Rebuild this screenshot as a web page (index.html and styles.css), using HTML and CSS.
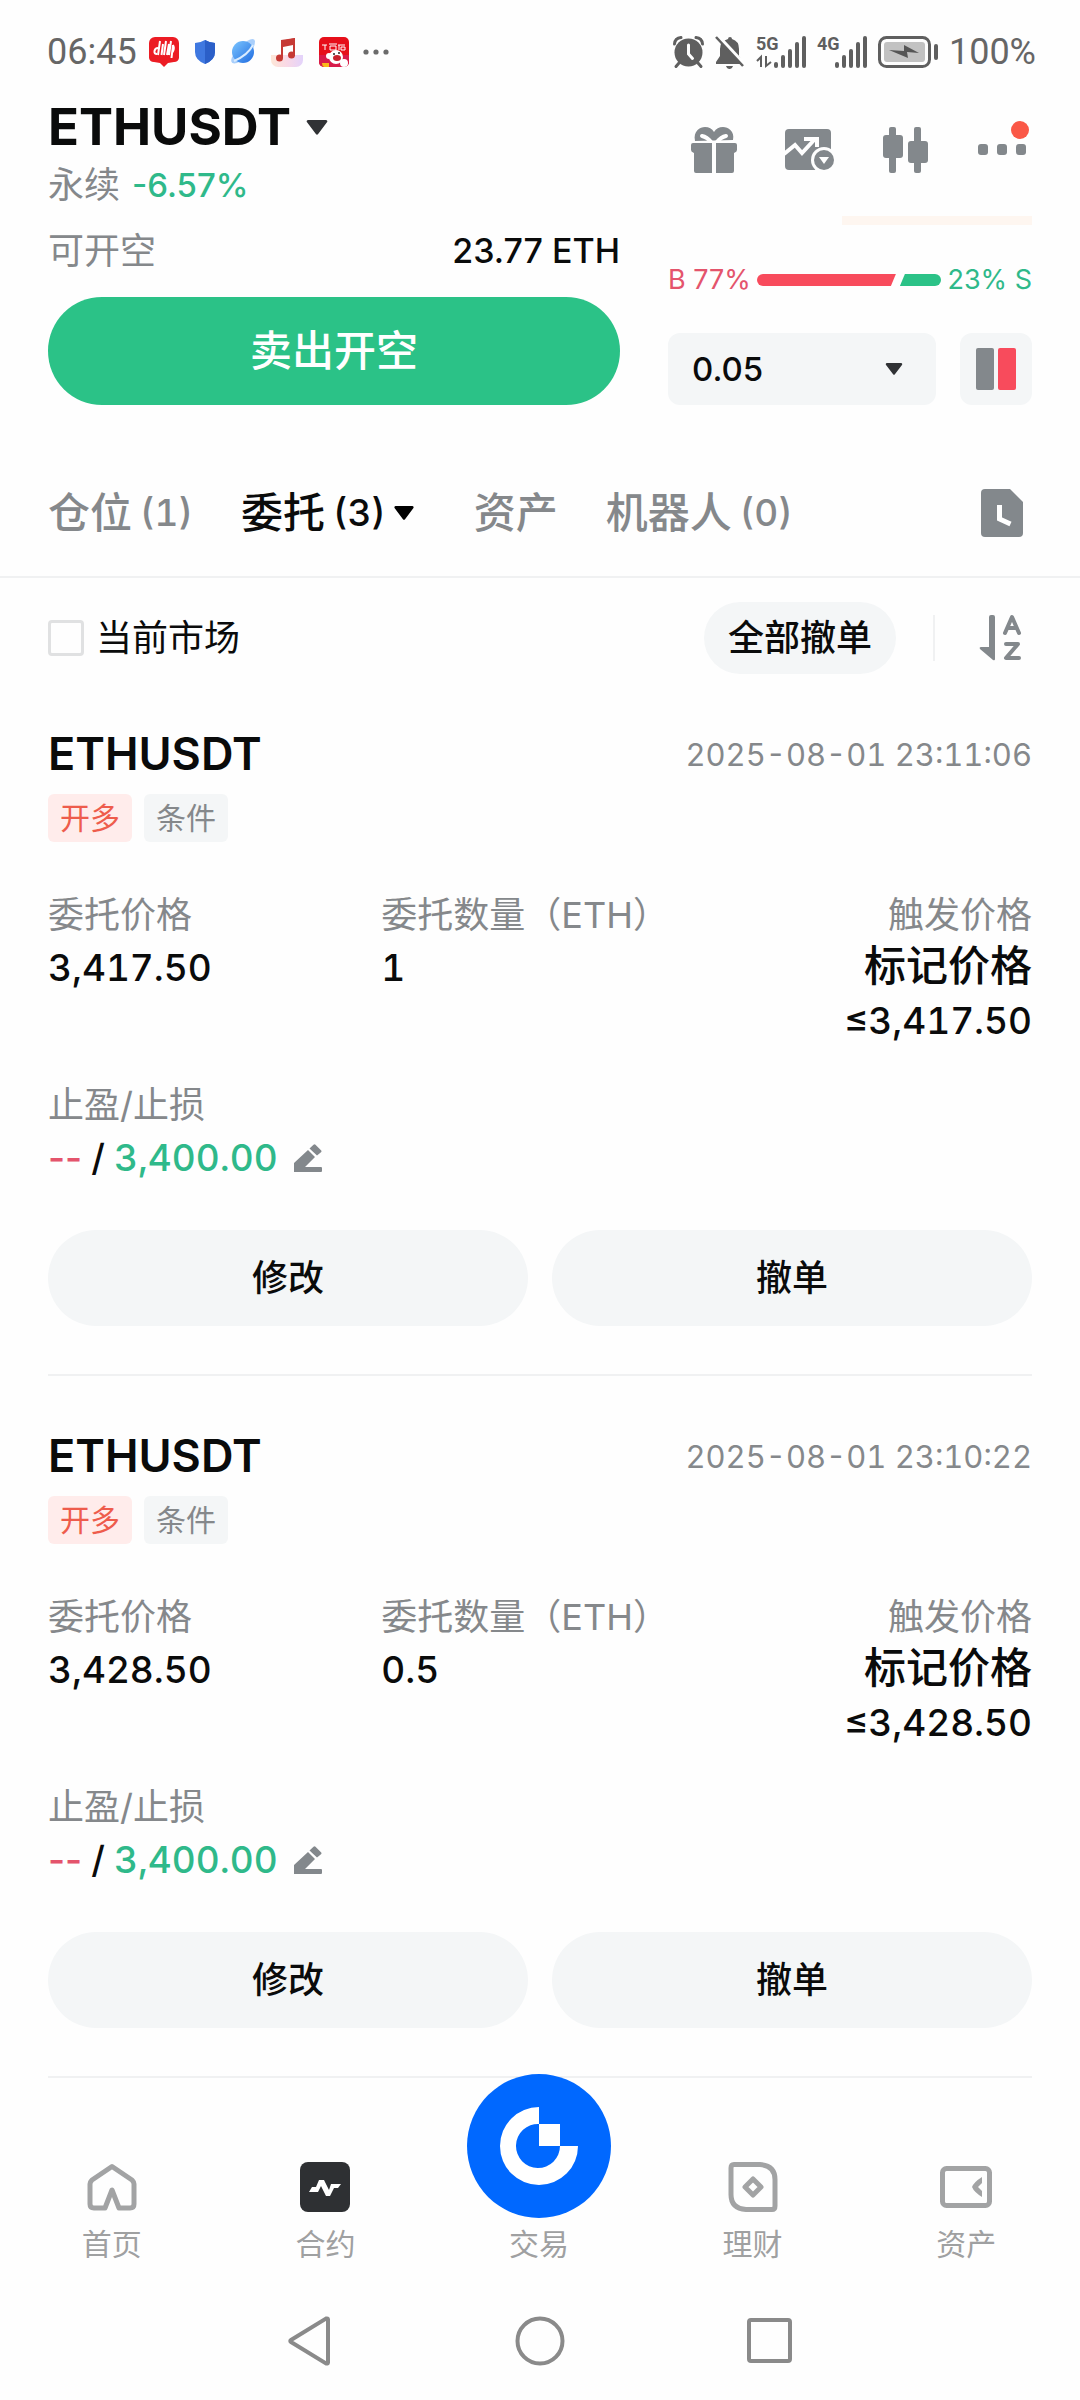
FILE: index.html
```html
<!DOCTYPE html>
<html lang="zh-CN">
<head>
<meta charset="utf-8">
<meta name="viewport" content="width=device-width, initial-scale=1">
<title>ETHUSDT 永续</title>
<link rel="stylesheet" href="styles.css">
</head>
<body>
<svg class="defs" aria-hidden="true">
  <symbol id="caret" viewBox="0 0 22 16"><path d="M1.500 0h19a1.500 1.500 0 0 1 1.100 2.500l-9.400 12.500a1.500 1.500 0 0 1-2.400 0L.4 2.500A1.500 1.500 0 0 1 1.500 0z"/></symbol>
  <symbol id="pencil" viewBox="0 0 28 28"><path d="M0 28V19L14 6l7 7-10 10h16q1 0 1 1v3q0 1-1 1zM15.500 4.500 19.500.7q1-1 2 0l5.500 5.600q1 1 0 2L23 11.500z"/></symbol>
</svg>

<div class="statusbar">
  <span class="clock">06:45</span>
  <div class="notices">
    <svg width="30" height="30" viewBox="0 0 30 30"><path d="M6 0h18a6 6 0 0 1 6 6v15a5 5 0 0 1-5 4l-6 1-4 4-4-4-6-1a5 5 0 0 1-5-4V6a6 6 0 0 1 6-6z" fill="#ec1c24"/><path d="M11 4 9 18M9 11q-3 0-3.500 3T8 17M14 7l-1.500 11M17 4l-2 14M20 7l-2 11M20 18l2-14M24 8q2 4-1 8M24 8l-1.500 13" stroke="#fff" stroke-width="2" fill="none"/></svg>
    <svg width="20" height="24" viewBox="0 0 20 24"><path d="M10 0q5 3 10 3v9q0 8-10 12Q0 20 0 12V3q5 0 10-3z" fill="#3f78e0"/><path d="M10 0q5 3 10 3v9q0 8-10 12z" fill="#2b5fc8"/></svg>
    <svg width="24" height="26" viewBox="0 0 24 26"><defs><linearGradient id="sky" x1="0" y1="0" x2="1" y2="1"><stop offset="0" stop-color="#7cc6ff"/><stop offset="1" stop-color="#1f6be0"/></linearGradient></defs><path d="M1 18q-3 8 5 6Q24 14 24 2q-1-4-8 0" fill="#a9cffb"/><circle cx="12" cy="13" r="11" fill="url(#sky)"/><path d="M3 22Q17 16 22 6" stroke="#d9ecff" stroke-width="2" fill="none"/></svg>
    <svg width="32" height="30" viewBox="0 0 32 30"><defs><linearGradient id="rose"><stop offset="0" stop-color="#fde0cc"/><stop offset=".5" stop-color="#f8cfe0"/><stop offset="1" stop-color="#dcc8fa"/></linearGradient></defs><path d="M0 18h32v5a7 7 0 0 1-7 7H7a7 7 0 0 1-7-7z" fill="url(#rose)" opacity=".8"/><path d="M10 4 24 1v18h-2V8L12 10v11h-2z" fill="#c63a35"/><path d="M10 3 24 1v6l-14 2z" fill="#c63a35"/><circle cx="8.500" cy="21" r="3.500" fill="#c63a35"/><circle cx="20.500" cy="18" r="3.500" fill="#c63a35"/></svg>
    <svg width="30" height="30" viewBox="0 0 30 30"><rect width="30" height="30" rx="5" fill="#e60f1a"/><path d="M3 8h5M6 8v5M10 7h8M11 9h6v4h-6zM19 8h7M20 8v5M22 10h4v3h-4z" stroke="#fff" stroke-width="1" fill="none"/><path d="M0 18h30v7a5 5 0 0 1-5 5H5a5 5 0 0 1-5-5z" fill="#d81b4a"/><circle cx="17" cy="20" r="7" fill="#fff"/><circle cx="25" cy="26" r="4" fill="#fff"/><circle cx="10" cy="19" r="3" fill="#fff"/><ellipse cx="18" cy="21" rx="4" ry="3" fill="#c8202c"/><circle cx="15" cy="17" r="1" fill="#222"/><circle cx="20" cy="16" r="1" fill="#222"/><path d="M3 26h7v4H5q-2-1-2-4z" fill="#f9b91c"/></svg>
    <svg width="26" height="6" viewBox="0 0 26 6" fill="#6b6b6b"><circle cx="1" cy="3" r="2.600"/><circle cx="11" cy="3" r="2.600"/><circle cx="21" cy="3" r="2.600"/></svg>
  </div>
  <div class="system">
    <svg width="31" height="32" viewBox="0 0 31 32"><circle cx="15.500" cy="16.500" r="14" fill="#5f5f5f"/><path d="M1.500 8Q2 2 8 1.500M29.500 8Q29 2 23 1.500M6 27l-3 3.500M25 27l3 3.500" stroke="#5f5f5f" stroke-width="3" fill="none" stroke-linecap="round"/><path d="M15.500 9v9l4 4.500" stroke="#fff" stroke-width="3" fill="none" stroke-linecap="round"/></svg>
    <svg width="30" height="33" viewBox="0 0 30 33"><path d="M13 3q0-2 2-2t2 2q7 2 7 10v7l4 6v2H1v-2l4-6v-7Q5 5 13 3zM11 30h7q-1 3-3.500 3T11 30z" fill="#5f5f5f"/><path d="M3 0 30 29" stroke="#fff" stroke-width="4"/><path d="M1 1 28 30" stroke="#5f5f5f" stroke-width="2.500"/></svg>
    <svg class="signal" width="52" height="32" viewBox="0 0 52 32" fill="#5f5f5f"><text x="0" y="14" class="net">5G</text><path d="M1 25 5 21v10M10 20v10l5-4" stroke="#5f5f5f" stroke-width="2" fill="none"/><rect x="18" y="26" width="4" height="6" rx="2"/><rect x="25" y="19" width="4" height="13" rx="2"/><rect x="32" y="13" width="4" height="19" rx="2"/><rect x="39" y="6" width="4" height="26" rx="2"/><rect x="46" y="0" width="4" height="32" rx="2"/></svg>
    <svg class="signal" width="52" height="32" viewBox="0 0 52 32" fill="#5f5f5f"><text x="0" y="14" class="net">4G</text><rect x="18" y="26" width="4" height="6" rx="2"/><rect x="25" y="19" width="4" height="13" rx="2"/><rect x="32" y="13" width="4" height="19" rx="2"/><rect x="39" y="6" width="4" height="26" rx="2"/><rect x="46" y="0" width="4" height="32" rx="2"/></svg>
    <svg width="60" height="32" viewBox="0 0 60 32"><rect x="1.500" y="1.500" width="50" height="29" rx="7" fill="none" stroke="#5f5f5f" stroke-width="3"/><rect x="6" y="6" width="41" height="20" rx="3" fill="#c2c2c2"/><rect x="56" y="8" width="4" height="16" rx="2" fill="#5f5f5f"/><path d="M11 14l15 1V9l15 8-12-1 1 6z" fill="#555"/></svg>
    <span class="charge">100%</span>
  </div>
</div>

<header class="topbar">
  <div class="pair">
    <button class="pair-name" type="button">ETHUSDT <svg width="22" height="15" fill="#303235"><use href="#caret"/></svg></button>
    <p class="pair-info"><span>永续</span> <b class="up">-6.57%</b></p>
  </div>
  <div class="tools">
    <button type="button" aria-label="礼物"><svg width="48" height="48" viewBox="0 0 48 48" fill="#83888c"><path d="M5 16C3 6 10 2 15 2q6 0 9 5 3-5 9-5c5 0 12 4 10 13z"/><path d="M12 11q5 1 9 6M36 11q-5 1-9 6" stroke="#fff" stroke-width="4" stroke-linecap="round" fill="none"/><path d="M3 18h19v30H6q-2 0-2-2V28q-3-1-3-3v-5q0-2 2-2zM26 18h19q2 0 2 2v5q0 2-3 3v18q0 2-2 2H26z"/></svg></button>
    <button type="button" aria-label="行情图"><svg width="48" height="48" viewBox="0 0 48 48"><rect x="-1" y="4" width="46" height="41" rx="4" fill="#83888c"/><path d="M-2 29 9 20l7 8L29 14M18 14h13v8" stroke="#fff" stroke-width="4" fill="none"/><circle cx="38" cy="35" r="13" fill="#fefefe"/><circle cx="38" cy="35" r="10" fill="#83888c"/><path d="M33 32h10l-5 7z" fill="#fff"/></svg></button>
    <button type="button" aria-label="K线"><svg width="48" height="48" viewBox="0 0 48 48" fill="#83888c"><rect x="7" y="2" width="7" height="46" rx="2"/><rect x="1" y="10" width="20" height="23" rx="3"/><rect x="32" y="2" width="7" height="46" rx="2"/><rect x="26" y="16" width="20" height="22" rx="3"/></svg></button>
    <button type="button" aria-label="更多"><svg width="48" height="48" viewBox="0 0 48 48" fill="#83888c"><rect x="0" y="19" width="10" height="11" rx="3"/><rect x="19" y="19" width="10" height="11" rx="3"/><rect x="38" y="19" width="10" height="11" rx="3"/><circle cx="42" cy="5" r="9" fill="#fa5847"/></svg></button>
  </div>
</header>

<section class="trade">
  <div class="order-side">
    <p class="available"><span>可开空</span><b>23.77 ETH</b></p>
    <button class="sell" type="button">卖出开空</button>
  </div>
  <div class="book-side">
    <div class="depth"></div>
    <div class="ratio">
      <span class="down">B 77%</span>
      <div class="ratio-bar"><i class="buy" style="flex-grow: 77"></i><i class="ask" style="flex-grow: 23"></i></div>
      <span class="up">23% S</span>
    </div>
    <div class="book-tools">
      <div class="step">
        <select aria-label="深度精度"><option>0.05</option></select>
        <svg width="18" height="12" fill="#303235"><use href="#caret"/></svg>
      </div>
      <button class="book-view" type="button" aria-label="盘口样式"><svg width="40" height="42" viewBox="0 0 40 42"><rect width="18" height="42" rx="2" fill="#83888c"/><rect x="22" width="18" height="42" rx="2" fill="#f84b5c"/></svg></button>
    </div>
  </div>
</section>

<nav class="tabs">
  <button type="button">仓位 <span>(1)</span></button>
  <button type="button" class="active">委托 <span>(3)</span> <svg width="20" height="14"><use href="#caret"/></svg></button>
  <button type="button">资产</button>
  <button type="button">机器人 <span>(0)</span></button>
  <button type="button" class="history" aria-label="历史"><svg width="42" height="48" viewBox="0 0 42 48"><path d="M4 0h25l13 13v31q0 4-4 4H4q-4 0-4-4V4q0-4 4-4z" fill="#83888c"/><path d="M18.500 16v14l11 5" stroke="#fff" stroke-width="5" fill="none"/></svg></button>
</nav>

<div class="filter">
  <label><input type="checkbox"> 当前市场</label>
  <div class="filter-actions">
    <button class="cancel-all" type="button">全部撤单</button>
    <button class="sort" type="button" aria-label="排序"><svg width="42" height="46" viewBox="0 0 42 46"><path d="M10 2q0-2 2-2h2q2 0 2 2v42q0 2-2 1L1 34q-1-2 1-2h8z" fill="#83888c"/><path d="M26 18 33 2l7 16M28.500 13h9M27 29h12L27 43h13" stroke="#83888c" stroke-width="4" fill="none" stroke-linejoin="round" stroke-linecap="round"/></svg></button>
  </div>
</div>

<main class="orders">
  <article class="order">
    <div class="order-head"><h2>ETHUSDT</h2><time>2025-08-01 23:11:06</time></div>
    <p class="tags"><span class="tag long">开多</span><span class="tag">条件</span></p>
    <dl class="fields">
      <div><dt>委托价格</dt><dd>3,417.50</dd></div>
      <div><dt>委托数量（ETH）</dt><dd>1</dd></div>
      <div class="end"><dt>触发价格</dt><dd><span class="zh">标记价格</span><br>≤3,417.50</dd></div>
      <div><dt>止盈/止损</dt><dd class="stops"><span class="down">--</span> / <span class="up">3,400.00</span><button type="button" aria-label="编辑"><svg width="28" height="28"><use href="#pencil"/></svg></button></dd></div>
    </dl>
    <div class="actions"><button type="button">修改</button><button type="button">撤单</button></div>
  </article>
  <article class="order">
    <div class="order-head"><h2>ETHUSDT</h2><time>2025-08-01 23:10:22</time></div>
    <p class="tags"><span class="tag long">开多</span><span class="tag">条件</span></p>
    <dl class="fields">
      <div><dt>委托价格</dt><dd>3,428.50</dd></div>
      <div><dt>委托数量（ETH）</dt><dd>0.5</dd></div>
      <div class="end"><dt>触发价格</dt><dd><span class="zh">标记价格</span><br>≤3,428.50</dd></div>
      <div><dt>止盈/止损</dt><dd class="stops"><span class="down">--</span> / <span class="up">3,400.00</span><button type="button" aria-label="编辑"><svg width="28" height="28"><use href="#pencil"/></svg></button></dd></div>
    </dl>
    <div class="actions"><button type="button">修改</button><button type="button">撤单</button></div>
  </article>
</main>

<footer>
  <nav class="menu">
    <a href="#"><svg width="50" height="50" viewBox="0 0 50 50"><path d="M25 4.500 45 18q2 2 2 4v20q0 4-4 4H32L25 28l-7 18H7q-4 0-4-4V22q0-2 2-4z" fill="none" stroke="#a2a3a4" stroke-width="5" stroke-linejoin="round"/></svg>首页</a>
    <a href="#"><svg width="50" height="50" viewBox="0 0 50 50"><rect width="50" height="50" rx="8" fill="#2e3033"/><path d="M9 30l3-5h4l3-7h5l5 10 2-6h10l-3 4h-4l-4 8h-4l-5-10-3 6z" fill="#fff"/></svg>合约</a>
    <a href="#" class="main-action"><svg width="144" height="144" viewBox="0 0 144 144"><circle cx="72" cy="72" r="72" fill="#0068ff"/><path d="M72 33v17a22 22 0 1 0 21 22h18a39 39 0 1 1-39-39z" fill="#fff"/><path d="M72 50h21v22H72z" fill="#fff"/></svg>交易</a>
    <a href="#"><svg width="50" height="50" viewBox="0 0 50 50" fill="none" stroke="#a2a3a4" stroke-width="5"><path d="M6 2.500h26q15 1 15 15V44q0 3.500-3 3.500H18q-15-1-15-15V6q0-3.500 3-3.500z"/><path d="M25 17l8 8-8 8-8-8z" stroke-linejoin="round"/></svg>理财</a>
    <a href="#"><svg width="54" height="50" viewBox="0 0 54 50"><rect x="3.500" y="6.500" width="47" height="37" rx="4" fill="none" stroke="#a2a3a4" stroke-width="5"/><path d="M43 15v6l-4 4 4 4v6q-8-5-10-10 2-5 10-10z" fill="#a2a3a4"/></svg>资产</a>
  </nav>
  <nav class="keys">
    <button type="button" aria-label="返回"><svg width="50" height="50" viewBox="0 0 50 50"><path d="M43 3.500v43q0 1.500-2 1L6 26q-1.500-1 0-2L41 2.500q2-.5 2 1z"/></svg></button>
    <button type="button" aria-label="主屏"><svg width="50" height="50" viewBox="0 0 50 50"><circle cx="25" cy="25" r="22.500"/></svg></button>
    <button type="button" aria-label="最近任务"><svg width="50" height="50" viewBox="0 0 50 50"><rect x="4" y="4" width="41" height="41" rx="2"/></svg></button>
  </nav>
</footer>
</body>
</html>
```
FILE: styles.css
```css
* { box-sizing: border-box; }

body {
  margin: 0;
  min-height: 100vh;
  display: flex;
  flex-direction: column;
  background: #fefefe;
  color: #0a0b0b;
  font-family: Inter, "Noto Sans CJK SC", sans-serif;
  font-size: 36px;
}

p, h2, dl, dd { margin: 0; }
b { font-weight: 500; }
button {
  padding: 0;
  border: 0;
  background: none;
  color: inherit;
  font: inherit;
  line-height: 46px;
  cursor: pointer;
}
svg { display: block; flex: none; overflow: visible; }
.defs { position: absolute; width: 0; height: 0; }
.up { color: #2fb98a; }
.down { color: #e4546c; }

/* phone status bar */
.statusbar {
  display: flex;
  align-items: center;
  height: 104px;
  padding: 0 44px 0 47px;
  color: #666;
  font-family: Roboto, sans-serif;
  line-height: 40px;
}
.notices { display: flex; align-items: center; gap: 16px; margin-left: 12px; }
.system { display: flex; align-items: center; gap: 11px; margin-left: auto; }
.signal { margin-right: -2px; }
.net { font: 700 18px Roboto, sans-serif; }

/* pair name and tools */
.topbar {
  display: flex;
  justify-content: space-between;
  margin-top: -5px;
  padding: 0 54px 0 48px;
}
.pair-name {
  display: flex;
  align-items: center;
  gap: 15px;
  font-size: 51px;
  font-weight: 700;
  line-height: 56px;
}
.pair-info {
  display: flex;
  gap: 12px;
  margin-top: 7px;
  color: #85888b;
  line-height: 46px;
}
.pair-info b { font-size: 33px; }
.tools { display: flex; align-items: center; gap: 48px; height: 100px; }

/* order entry and order book */
.trade {
  display: grid;
  grid-template-columns: 11fr 7fr;
  gap: 48px;
  padding: 8px 48px 0;
}
.available {
  display: flex;
  justify-content: space-between;
  margin: 12px 0 23px;
  color: #85888b;
  line-height: 46px;
}
.available b { color: #0a0b0b; font-size: 34px; }
.sell {
  width: 100%;
  height: 108px;
  border-radius: 54px;
  background: #2bc287;
  color: #fff;
  font-size: 42px;
  font-weight: 500;
}
.depth { width: 190px; height: 9px; margin-left: auto; background: #fef6f0; }
.ratio {
  display: flex;
  align-items: center;
  gap: 6px;
  margin: 38px 0 36px;
  font-size: 27px;
  line-height: 34px;
  white-space: nowrap;
}
.ratio-bar { display: flex; flex: 1; gap: 4px; height: 12px; }
.ratio-bar i { flex-basis: 0; }
.buy {
  border-radius: 6px 0 0 6px;
  background: #f84b5c;
  clip-path: polygon(0 0, 100% 0, calc(100% - 5px) 100%, 0 100%);
}
.ask {
  border-radius: 0 6px 6px 0;
  background: #2bc287;
  clip-path: polygon(5px 0, 100% 0, 100% 100%, 0 100%);
}
.book-tools { display: flex; gap: 24px; height: 72px; }
.step { display: grid; flex: 1; align-items: center; }
.step select, .step svg { grid-area: 1 / 1; }
.step select {
  width: 100%;
  height: 72px;
  padding: 0 24px;
  border: 0;
  border-radius: 12px;
  appearance: none;
  background: #f4f6f7;
  color: inherit;
  font: 500 33px Inter, sans-serif;
}
.step svg { justify-self: end; margin-right: 33px; pointer-events: none; }
.book-view {
  display: grid;
  place-items: center;
  width: 72px;
  border-radius: 12px;
  background: #f4f6f7;
}

/* section tabs */
.tabs {
  display: flex;
  align-items: center;
  gap: 48px;
  height: 129px;
  margin-top: 44px;
  padding: 0 57px 0 48px;
  border-bottom: 2px solid #f0f1f2;
  color: #85888b;
  font-size: 42px;
  font-weight: 500;
}
.tabs button { display: flex; align-items: center; gap: 8px; line-height: 50px; }
.tabs span { font-size: 37px; font-variant-numeric: tabular-nums; }
.tabs .active { margin-right: 12px; color: #0a0b0b; }
.tabs .history { margin-left: auto; }

.filter {
  display: flex;
  align-items: center;
  justify-content: space-between;
  padding: 24px 59px 0 48px;
}
.filter label { display: flex; align-items: center; gap: 12px; line-height: 46px; }
.filter input {
  width: 36px;
  height: 36px;
  margin: 0;
  border: 3px solid #e0e1e2;
  border-radius: 4px;
  appearance: none;
}
.filter-actions { display: flex; align-items: center; gap: 37px; }
.cancel-all {
  height: 72px;
  padding: 0 24px;
  border-radius: 36px;
  background: #f4f6f7;
  font-weight: 500;
}
.sort { padding-left: 44px; border-left: 2px solid #f0f1f2; }

/* open orders */
.orders { flex: 1; padding: 0 48px; }
.order { padding: 52px 0 48px; border-bottom: 2px solid #f0f1f2; }
.order-head { display: flex; align-items: center; justify-content: space-between; }
.order h2 { font-size: 45px; font-weight: 600; line-height: 56px; }
.order time { color: #85888b; font-size: 31px; font-variant-numeric: tabular-nums; }
.tags { display: flex; gap: 12px; margin: 12px 0 47px; }
.tag {
  padding: 0 12px;
  border-radius: 6px;
  background: #f4f6f7;
  color: #85888b;
  font-size: 30px;
  line-height: 48px;
}
.long { background: #ffeceb; color: #ee5c4c; }
.fields {
  display: grid;
  grid-template-columns: repeat(3, 1fr);
  gap: 32px 16px;
}
.fields dt { color: #85888b; line-height: 52px; white-space: nowrap; }
.fields dd {
  font-size: 37px;
  font-weight: 500;
  font-variant-numeric: tabular-nums;
  line-height: 53px;
}
.fields .zh { font-size: 42px; line-height: 1; }
.end { text-align: right; }
.fields .stops { display: flex; align-items: center; gap: 9px; font-variant-numeric: normal; }
.stops .up { font-variant-numeric: tabular-nums; }
.stops button { margin-left: 7px; fill: #83888c; }
.actions { display: flex; gap: 24px; margin-top: 46px; }
.actions button {
  flex: 1;
  height: 96px;
  border-radius: 48px;
  background: #f4f6f7;
  font-weight: 500;
}

/* bottom menu and system keys */
.menu {
  display: grid;
  grid-template-columns: repeat(5, 1fr);
  height: 204px;
  padding: 0 7px 20px 5px;
}
.menu a {
  display: flex;
  flex-direction: column;
  align-items: center;
  justify-content: flex-end;
  gap: 14px;
  color: #9fa0a1;
  font-size: 30px;
  line-height: 36px;
  text-decoration: none;
}
.menu .main-action { gap: 8px; }
/* the round button rises above the menu's top edge */
.main-action svg { margin-top: -12px; }
.keys {
  display: flex;
  align-items: center;
  justify-content: center;
  gap: 180px;
  height: 118px;
  fill: none;
  stroke: #8a8a8a;
  stroke-width: 4px;
}
```
